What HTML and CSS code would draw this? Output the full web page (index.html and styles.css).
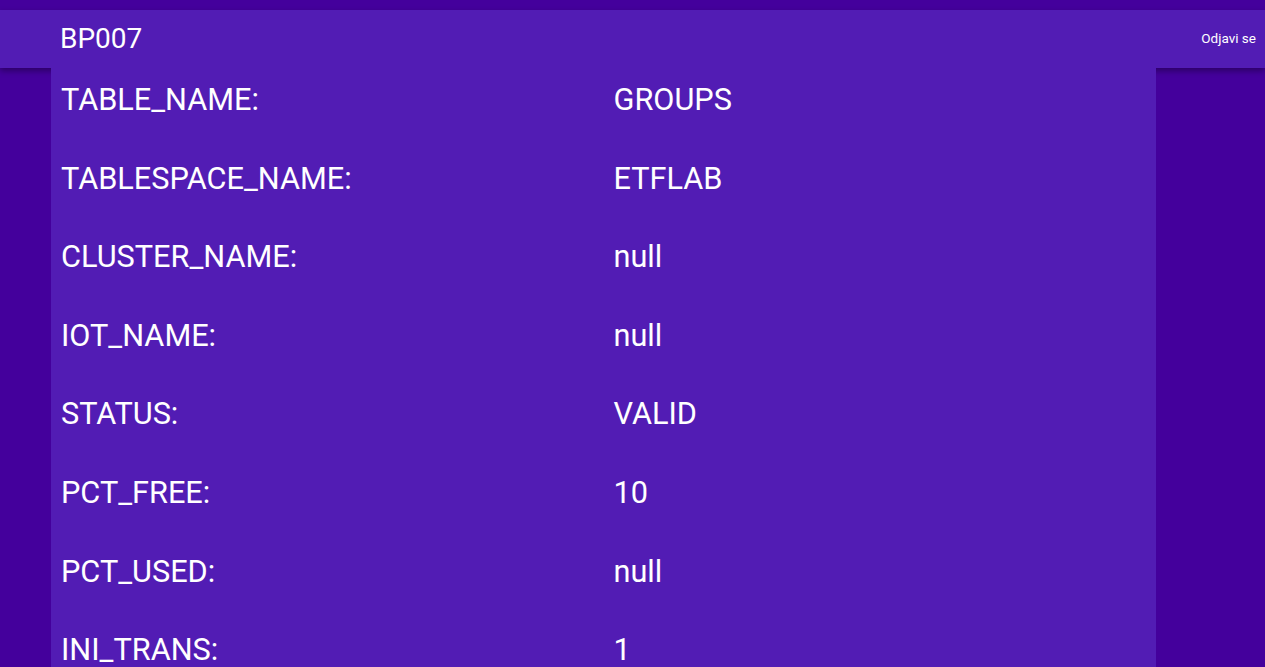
FILE: index.html
```html
<!DOCTYPE html>
<html lang="sr">
<head>
<meta charset="utf-8">
<title>BP007</title>
<link rel="stylesheet" href="styles.css">
</head>
<body>
<header class="toolbar">
  <span class="title">BP007</span>
  <a class="logout" href="#">Odjavi se</a>
</header>
<main class="card">
  <div class="row"><span class="cell">TABLE_NAME:</span><span class="cell">GROUPS</span></div>
  <div class="row"><span class="cell">TABLESPACE_NAME:</span><span class="cell">ETFLAB</span></div>
  <div class="row"><span class="cell">CLUSTER_NAME:</span><span class="cell">null</span></div>
  <div class="row"><span class="cell">IOT_NAME:</span><span class="cell">null</span></div>
  <div class="row"><span class="cell">STATUS:</span><span class="cell">VALID</span></div>
  <div class="row"><span class="cell">PCT_FREE:</span><span class="cell">10</span></div>
  <div class="row"><span class="cell">PCT_USED:</span><span class="cell">null</span></div>
  <div class="row"><span class="cell">INI_TRANS:</span><span class="cell">1</span></div>
</main>
</body>
</html>
```

FILE: styles.css
```css
html, body {
  margin: 0;
  padding: 0;
}
body {
  background: #44009c;
  font-family: Roboto, "Noto Sans", sans-serif;
  color: #ffffff;
  padding-top: 10px;
  overflow: hidden;
  height: 657px;
}
.toolbar {
  position: relative;
  z-index: 1;
  height: 58px;
  background: #521cb4;
  display: flex;
  align-items: center;
  justify-content: space-between;
  padding: 0 9px 0 60px;
  box-shadow: 0 3px 6px rgba(0, 0, 0, 0.35);
}
.title {
  font-size: 28px;
  line-height: 1;
  margin-top: 0;
}
.logout {
  color: #ffffff;
  text-decoration: none;
  font-size: 13.5px;
  margin-top: -3px;
}
.card {
  position: relative;
  z-index: 2;
  margin: 0 109px 0 51px;
  background: #521cb4;
  display: flex;
  flex-direction: column;
}
.row {
  display: grid;
  grid-template-columns: 1fr 1fr;
  height: 78.6px;
  box-sizing: border-box;
  padding-top: 14px;
}
.cell {
  padding: 0 10px;
  font-size: 30.7px;
  line-height: 35px;
}
```
